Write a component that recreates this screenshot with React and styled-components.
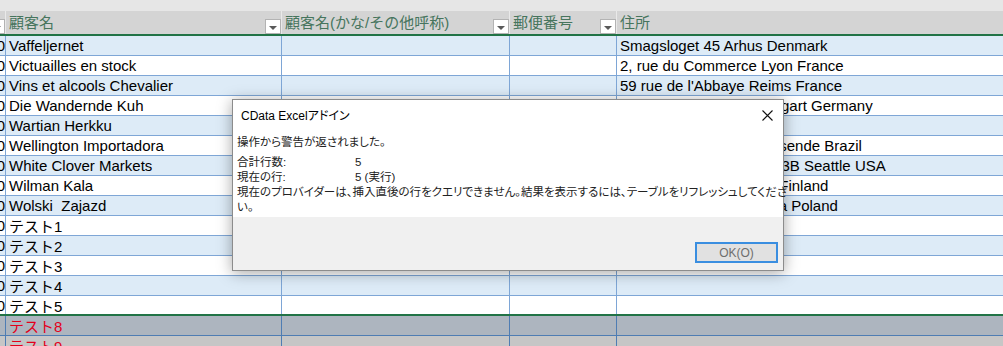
import React from 'react';
import styled, { createGlobalStyle } from 'styled-components';

const GlobalStyle = createGlobalStyle`
  body {
    margin: 0;
    background: #ffffff;
  }
`;

const COLS = '6px 276px 228px 107px 1fr';

const Page = styled.div`
  position: relative;
  width: 1003px;
  height: 346px;
  overflow: hidden;
  font-family: 'Liberation Sans', 'Noto Sans CJK JP', sans-serif;
`;

const TopStrip = styled.div`
  height: 11px;
  background: #e6e6e6;
`;

const HeaderRow = styled.div`
  display: grid;
  grid-template-columns: ${COLS};
  height: 25px;
  box-sizing: border-box;
  background: #d4d4d4;
  border-bottom: 2px solid #217346;
`;

const HeaderCell = styled.div`
  display: flex;
  justify-content: ${(p) => (p.$edge ? 'flex-end' : 'space-between')};
  overflow: hidden;
  box-sizing: border-box;
  padding-left: ${(p) => (p.$edge ? '0' : '3px')};
  border-right: ${(p) => (p.$last ? 'none' : '1px solid #e9e9e9')};
  color: #46755d;
  font-size: 15px;
  line-height: 23px;
  white-space: nowrap;
`;

const FilterButton = styled.div`
  flex: none;
  align-self: flex-end;
  display: flex;
  align-items: center;
  justify-content: center;
  width: 16px;
  height: 15px;
  box-sizing: border-box;
  margin-bottom: 0;
  border: 1px solid #b3b3b3;
  background: #ffffff;

  &::after {
    content: '';
    margin-top: 3px;
    border-left: 4px solid transparent;
    border-right: 4px solid transparent;
    border-top: 4px solid #5a5a5a;
  }
`;

const tones = {
  blue: { bg: '#ddebf7', line: '#7ea6d6', text: '#000000' },
  white: { bg: '#ffffff', line: '#7ea6d6', text: '#000000' },
  steel: { bg: '#adb5bf', line: '#4f7db3', text: '#e3001b' },
  gray: { bg: '#c6c6c6', line: '#4f7db3', text: '#e3001b' },
};

const DataRow = styled.div`
  display: grid;
  grid-template-columns: ${COLS};
  height: 20px;
  box-sizing: border-box;
  background: ${(p) => tones[p.$tone].bg};
  border-bottom: ${(p) =>
    p.$closing ? '2px solid #217346' : `1px solid ${tones[p.$tone].line}`};
`;

const Cell = styled.div`
  display: flex;
  align-items: center;
  justify-content: ${(p) => (p.$edge ? 'flex-end' : 'flex-start')};
  overflow: hidden;
  box-sizing: border-box;
  padding-left: ${(p) => (p.$edge ? '0' : '3px')};
  border-right: ${(p) => (p.$last ? 'none' : `1px solid ${p.$line}`)};
  color: ${(p) => p.$color};
  font-size: 15px;
  white-space: pre;
`;

const Dialog = styled.div`
  position: absolute;
  left: 232px;
  top: 99px;
  width: 552px;
  height: 172px;
  box-sizing: border-box;
  display: flex;
  flex-direction: column;
  border: 1px solid #8c8c8c;
  background: #ffffff;
  box-shadow: 0 2px 14px rgba(0, 0, 0, 0.35);
  font-family: 'Liberation Sans', 'Noto Sans CJK JP', sans-serif;
  font-feature-settings: 'palt';
  color: #222222;
`;

const TitleBar = styled.div`
  display: flex;
  align-items: center;
  justify-content: space-between;
  height: 29px;
  padding: 0 10px 0 8px;
  font-size: 12px;
  color: #000000;
`;

const CloseIcon = styled.svg`
  width: 11px;
  height: 11px;
  margin-top: 2px;
`;

const Body = styled.div`
  flex: 1;
  padding: 6px 4px 0 4px;
  font-size: 11.5px;
  line-height: 15px;
`;

const Line = styled.div`
  white-space: nowrap;
  margin-bottom: ${(p) => (p.$gap ? '5px' : '0')};
`;

const InfoRow = styled.div`
  display: grid;
  grid-template-columns: 118px 1fr;
  white-space: nowrap;
`;

const Footer = styled.div`
  display: flex;
  justify-content: flex-end;
  align-items: flex-end;
  height: 53px;
  padding: 0 5px 7px 0;
  box-sizing: border-box;
  background: #f0f0f0;
`;

const OkButton = styled.div`
  width: 83px;
  height: 21px;
  box-sizing: border-box;
  display: flex;
  align-items: center;
  justify-content: center;
  border: 2px solid #3a8ee0;
  background: #e1e1e1;
  color: #6e6e6e;
  font-size: 12px;
`;

const rows = [
  ['Vaffeljernet', 'Smagsloget 45 Arhus Denmark'],
  ['Victuailles en stock', '2, rue du Commerce Lyon France'],
  ['Vins et alcools Chevalier', "59 rue de l'Abbaye Reims France"],
  ['Die Wandernde Kuh', 'Adenauerallee 900 Stuttgart Germany'],
  ['Wartian Herkku', 'Torikatu 38 Oulu Finland'],
  ['Wellington Importadora', 'Rua do Mercado, 12 Resende Brazil'],
  ['White Clover Markets', '305 - 14th Ave. S. Suite 3B Seattle USA'],
  ['Wilman Kala', 'Keskuskatu 45 Helsinki Finland'],
  ['Wolski  Zajazd', 'ul. Filtrowa 68 Warszawa Poland'],
  ['テスト1', ''],
  ['テスト2', ''],
  ['テスト3', ''],
  ['テスト4', ''],
  ['テスト5', ''],
];

const pending = ['テスト8', 'テスト9'];

const headers = ['顧客名', '顧客名(かな/その他呼称)', '郵便番号', '住所'];

const Row = ({ tone, closing, lead, name, address }) => {
  const t = tones[tone];
  return (
    <DataRow $tone={tone} $closing={closing}>
      <Cell $edge $line={t.line} $color={t.text}>
        {lead}
      </Cell>
      <Cell $line={t.line} $color={t.text}>
        {name}
      </Cell>
      <Cell $line={t.line} $color={t.text} />
      <Cell $line={t.line} $color={t.text} />
      <Cell $last $line={t.line} $color={t.text}>
        {address}
      </Cell>
    </DataRow>
  );
};

const App = () => {
  return (
    <Page>
      <GlobalStyle />
      <TopStrip />
      <HeaderRow>
        <HeaderCell $edge>
          <FilterButton />
        </HeaderCell>
        {headers.map((h, i) => (
          <HeaderCell key={h} $last={i === headers.length - 1}>
            <span>{h}</span>
            {i < headers.length - 1 && <FilterButton />}
          </HeaderCell>
        ))}
      </HeaderRow>
      {rows.map(([name, address], i) => (
        <Row
          key={name}
          tone={i % 2 === 0 ? 'blue' : 'white'}
          closing={i === rows.length - 1}
          lead="0"
          name={name}
          address={address}
        />
      ))}
      {pending.map((name, i) => (
        <Row key={name} tone={i === 0 ? 'steel' : 'gray'} lead="" name={name} address="" />
      ))}

      <Dialog>
        <TitleBar>
          <span>CData Excelアドイン</span>
          <CloseIcon viewBox="0 0 11 11">
            <path d="M0.5 0.5 L10.5 10.5 M10.5 0.5 L0.5 10.5" stroke="#111" strokeWidth="1.1" fill="none" />
          </CloseIcon>
        </TitleBar>
        <Body>
          <Line $gap>操作から警告が返されました。</Line>
          <InfoRow>
            <span>合計行数:</span>
            <span>5</span>
          </InfoRow>
          <InfoRow>
            <span>現在の行:</span>
            <span>5 (実行)</span>
          </InfoRow>
          <Line>
            現在のプロバイダーは、挿入直後の行をクエリできません。結果を表示するには、テーブルをリフレッシュしてくださ
          </Line>
          <Line>い。</Line>
        </Body>
        <Footer>
          <OkButton>OK(O)</OkButton>
        </Footer>
      </Dialog>
    </Page>
  );
};

export default App;
